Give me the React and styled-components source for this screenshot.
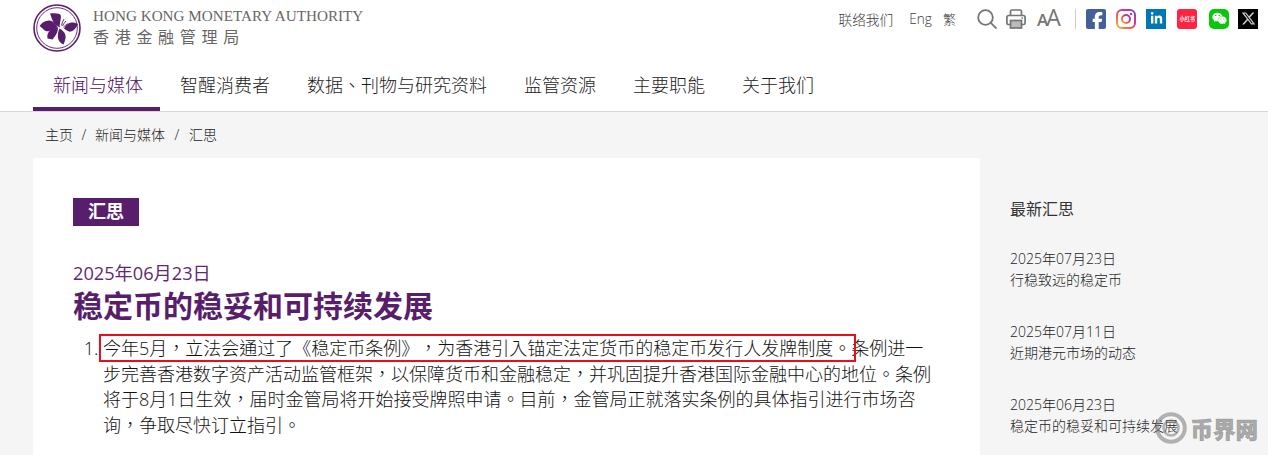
import React from 'react'
import styled, { createGlobalStyle } from 'styled-components'
import { FaFacebookF, FaLinkedinIn, FaWeixin, FaXTwitter } from 'react-icons/fa6'

const PURPLE = '#591e6b'
const FONT = '"Open Sans", "Noto Sans CJK TC", sans-serif'

const GlobalStyle = createGlobalStyle`
  html, body {
    margin: 0;
    background: #f5f5f5;
    overflow: hidden;
  }
  body {
    font-family: ${FONT};
    color: #333;
    text-spacing-trim: space-all;
    font-feature-settings: "palt" 0;
  }
  * { box-sizing: border-box; }
`

const Page = styled.div`
  width: 1268px;
  height: 455px;
  overflow: hidden;
  position: relative;
`

const Header = styled.header`
  background: #fff;
  height: 112px;
  border-bottom: 1px solid #d8d8d8;
  padding-left: 33px;
`

const TopRow = styled.div`
  height: 64px;
  display: flex;
  justify-content: space-between;
  align-items: flex-start;
`

const Logo = styled.a`
  display: flex;
  gap: 12px;
  padding-top: 4px;
`

const LogoText = styled.div`
  display: flex;
  flex-direction: column;
  padding-top: 3px;
  color: #666;
`

const LogoEn = styled.span`
  font-family: "Liberation Serif", serif;
  font-size: 15.2px;
  line-height: 18px;
  white-space: nowrap;
`

const LogoZh = styled.span`
  font-family: "Noto Sans CJK TC", serif;
  font-size: 16px;
  line-height: 22px;
  letter-spacing: 5.7px;
  white-space: nowrap;
`

const Tools = styled.div`
  display: flex;
  align-items: center;
  height: 37px;
  padding-right: 10px;
`

const TopLink = styled.a`
  font-size: ${p => p.$size || 13.7}px;
  font-weight: 300;
  color: #3c3c3c;
  margin-right: ${p => p.$gap}px;
  white-space: nowrap;
`

const ToolIcon = styled.svg`
  display: block;
  margin-right: ${p => p.$gap}px;
  flex: none;
`

const SizeToggle = styled.span`
  display: flex;
  align-items: baseline;
  width: 23px;
  margin-right: 15px;
  color: #757575;
  line-height: 20px;
  font-family: "Open Sans", sans-serif;
  font-size: 23px;
  font-weight: 400;
`

const SmallA = styled.span`
  font-size: 17px;
  font-weight: 600;
  margin-right: -2px;
`

const Divider = styled.span`
  width: 1px;
  height: 20px;
  background: #ccc;
  margin-right: 10px;
`

const Social = styled.a`
  width: 20px;
  height: 20px;
  flex: none;
  display: flex;
  align-items: ${p => p.$low ? 'flex-end' : 'center'};
  justify-content: ${p => p.$low ? 'flex-end' : 'center'};
  margin-right: ${p => p.$gap}px;
  border-radius: ${p => p.$radius || 0}px;
  background: ${p => p.$bg};
  color: ${p => p.$color || '#fff'};
  font-size: ${p => p.$icon || 14}px;
  overflow: hidden;
`

const RedNoteLabel = styled.span`
  font-size: 5.5px;
  font-weight: 700;
  white-space: nowrap;
  transform: scale(0.95);
`

const Nav = styled.nav`
  display: flex;
  height: 47px;
`

const NavItem = styled.a`
  padding: 8px 17px 0 20px;
  font-size: 18px;
  line-height: 26px;
  white-space: nowrap;
  font-weight: 300;
  color: ${p => (p.$active ? '#4a0e5e' : '#1c1c1c')};
  border-bottom: 4px solid ${p => (p.$active ? PURPLE : 'transparent')};
`

const Crumbs = styled.div`
  height: 46px;
  padding: 0 0 2px 45px;
  display: flex;
  align-items: center;
  font-size: 14px;
  font-weight: 300;
  color: #222;
`

const Slash = styled.span`
  width: ${p => p.$w}px;
  text-align: center;
  font-size: 14px;
`

const Body = styled.div`
  display: flex;
  padding-left: 33px;
`

const Card = styled.main`
  width: 947px;
  min-height: 400px;
  background: #fff;
  padding: 40px 40px 0;
  flex: none;
`

const Tag = styled.span`
  display: block;
  width: 66px;
  height: 28px;
  background: ${PURPLE};
  color: #fff;
  font-size: 18px;
  font-weight: 700;
  line-height: 26px;
  text-align: center;
`

const DateLine = styled.div`
  margin-top: 33px;
  font-size: 18.2px;
  font-weight: 400;
  line-height: 28px;
  color: #5f2a72;
`

const Title = styled.h1`
  margin: 0;
  font-size: 30px;
  line-height: 38px;
  font-weight: 700;
  color: ${PURPLE};
`

const List = styled.ol`
  margin: 11px 0 0;
  padding: 0 0 0 30px;
  font-size: 18px;
  font-weight: 300;
  line-height: 25.7px;
  color: #111;
  width: 860px;
`

const ListEntry = styled.li`
  position: relative;
`

const RedBox = styled.span`
  position: absolute;
  left: -4px;
  top: -2px;
  width: 757px;
  height: 28px;
  border: 2px solid #e60f1e;
  pointer-events: none;
`

const Side = styled.aside`
  padding: 40px 0 0 30px;
  width: 280px;
`

const SideHead = styled.h2`
  margin: 0 0 28px;
  font-size: 16px;
  line-height: 22px;
  font-weight: 400;
  color: #333;
`

const SideItem = styled.a`
  display: block;
  margin-bottom: 31px;
  font-size: 14px;
  font-weight: 300;
  line-height: 21px;
  color: #222;
  white-space: nowrap;
`

const SideDate = styled.div``

const Watermark = styled.div`
  position: absolute;
  right: 10px;
  top: 412px;
  display: flex;
  align-items: center;
  gap: 3px;
  color: rgba(120, 120, 120, 0.62);
  font-family: "Noto Sans CJK SC", sans-serif;
  font-size: 22.5px;
  font-weight: 900;
  -webkit-text-stroke: 0.5px rgba(120, 120, 120, 0.62);
  line-height: 32px;
`

const SIDE_ITEMS = [
  { date: '2025年07月23日', title: '行稳致远的稳定币' },
  { date: '2025年07月11日', title: '近期港元市场的动态' },
  { date: '2025年06月23日', title: '稳定币的稳妥和可持续发展' },
]

const NAV_ITEMS = ['新闻与媒体', '智醒消费者', '数据、刊物与研究资料', '监管资源', '主要职能', '关于我们']

function Emblem() {
  return (
    <svg width="48" height="48" viewBox="0 0 48 48">
      <circle cx="24" cy="24" r="23" fill="none" stroke={PURPLE} strokeWidth="1.600" />
      <circle cx="24" cy="24" r="20.300" fill="none" stroke={PURPLE} strokeWidth="0.900" />
      <g fill={PURPLE}>
        <path d="M17 9.500c3.500-.5 7-.5 9.500.5 2 1 1.500 4 1 6.500-.5 2-.8 4.500-.5 7-3-1.500-5.500-3.500-7-6-1.200-2.500-2-5.500-3-8z" />
        <path d="M6.500 22c2.500-3.500 6-5.800 10-5.500 3.500.4 6.500 3.500 8.500 7-3 .3-5.500 2.500-8.500 3.500-2.500.8-4.500 0-6-1.500-1-1.200-2.500-2.500-4-3.500z" />
        <path d="M14.500 34.500c-.8-3.500.5-6.500 3-8.500 2-1.500 4.500-2.500 7.500-2.500 0 3-1 6-2.500 8-1 1.500-2 2.500-3 4-1.500-.5-3.500-.5-5-1z" />
        <path d="M26.500 24.500c2.800 1.500 5.500 4 6 7 .4 2.500-.5 5.500-2 9-2.800-1-5-3.500-5.500-6.500-.5-3.500.2-6.800 1.500-9.500z" />
        <path d="M31 24.500c1.500-3 4-5.500 7-6 2.500-.4 4.800.3 7 1.500-1.500 3.500-3.800 6.500-7 7.500-2.500.8-5-1.500-7-3z" />
      </g>
      <g fill="none" stroke="#fff" strokeWidth="0.700">
        <path d="M27 22c.3-2 .8-3.500 1.700-5" />
      </g>
      <g fill="none" stroke={PURPLE} strokeWidth="0.900">
        <path d="M28.500 21.500c.5-2.500 1.500-4.500 2.500-6.500M29.500 22c1-2 2-3.500 3.500-5M30.500 23c1.500-1 2.500-2.500 4-3.500" />
      </g>
    </svg>
  )
}

function SearchIcon() {
  return (
    <ToolIcon $gap={9} width="20" height="20" viewBox="0 0 20 20" fill="none" stroke="#757575" strokeWidth="1.800">
      <circle cx="8.500" cy="8.500" r="7.300" />
      <path d="M13.800 13.800L19.500 19.500" />
    </ToolIcon>
  )
}

function PrintIcon() {
  return (
    <ToolIcon $gap={11} width="20" height="20" viewBox="0 0 20 20" fill="none" stroke="#757575" strokeWidth="1.700">
      <path d="M4.500 6.500V2.500c0-1 .6-1.500 1.500-1.500h8c.9 0 1.500.5 1.500 1.500v4" />
      <path d="M4.500 15.500H2.500c-1 0-1.600-.6-1.600-1.600V8.500c0-1.200.8-2 2-2h14.200c1.200 0 2 .8 2 2v5.400c0 1-.6 1.600-1.600 1.600h-2" />
      <rect x="4.500" y="11.500" width="11" height="7.500" fill="#bbb" />
      <path d="M15.500 9h1.500" />
    </ToolIcon>
  )
}

function InstagramIcon() {
  return (
    <ToolIcon $gap={10} width="20" height="20" viewBox="0 0 20 20" fill="none" strokeWidth="2">
      <defs>
        <linearGradient id="igStroke" x1="0" y1="1" x2="1" y2="0">
          <stop offset="0" stopColor="#f9b233" />
          <stop offset="0.5" stopColor="#ee3a6a" />
          <stop offset="1" stopColor="#7a45d0" />
        </linearGradient>
      </defs>
      <rect x="1" y="1" width="18" height="18" rx="5" stroke="url(#igStroke)" />
      <circle cx="10" cy="10" r="4" stroke="url(#igStroke)" />
      <circle cx="15" cy="5" r="1.200" fill="#b32fc0" stroke="none" />
    </ToolIcon>
  )
}

function CoinMark() {
  return (
    <svg width="32" height="32" viewBox="0 0 32 32" fill="none" stroke="rgba(120,120,120,0.55)">
      <circle cx="16" cy="16" r="13.800" strokeWidth="4" />
      <circle cx="16" cy="16" r="7.500" strokeWidth="2.500" />
    </svg>
  )
}

export default function App() {
  return (
    <Page>
      <GlobalStyle />
      <Header>
        <TopRow>
          <Logo>
            <Emblem />
            <LogoText>
              <LogoEn>HONG KONG MONETARY AUTHORITY</LogoEn>
              <LogoZh>香港金融管理局</LogoZh>
            </LogoText>
          </Logo>
          <Tools>
            <TopLink $gap={16}>联络我们</TopLink>
            <TopLink $gap={11}>Eng</TopLink>
            <TopLink $gap={21} $size={13}>繁</TopLink>
            <SearchIcon />
            <PrintIcon />
            <SizeToggle><SmallA>A</SmallA>A</SizeToggle>
            <Divider />
            <Social $gap={10} $radius={2} $icon={17} $low $bg="#43609c"><FaFacebookF /></Social>
            <InstagramIcon />
            <Social $gap={11} $icon={13} $bg="#0077b5"><FaLinkedinIn /></Social>
            <Social $gap={12} $radius={3} $bg="#ff2442"><RedNoteLabel>小红书</RedNoteLabel></Social>
            <Social $gap={9} $radius={5} $icon={15} $bg="#09c709"><FaWeixin /></Social>
            <Social $gap={0} $icon={15} $bg="#000" $color="#ccc"><FaXTwitter /></Social>
          </Tools>
        </TopRow>
        <Nav>
          {NAV_ITEMS.map((item, i) => (
            <NavItem key={item} $active={i === 0}>{item}</NavItem>
          ))}
        </Nav>
      </Header>
      <Crumbs>
        主页<Slash $w={22}>/</Slash>新闻与媒体<Slash $w={24}>/</Slash>汇思
      </Crumbs>
      <Body>
        <Card>
          <Tag>汇思</Tag>
          <DateLine>2025年06月23日</DateLine>
          <Title>稳定币的稳妥和可持续发展</Title>
          <List>
            <ListEntry>
              <RedBox />
              今年5月，立法会通过了《稳定币条例》，为香港引入锚定法定货币的稳定币发行人发牌制度。条例进一步完善香港数字资产活动监管框架，以保障货币和金融稳定，并巩固提升香港国际金融中心的地位。条例将于8月1日生效，届时金管局将开始接受牌照申请。目前，金管局正就落实条例的具体指引进行市场咨询，争取尽快订立指引。
            </ListEntry>
          </List>
        </Card>
        <Side>
          <SideHead>最新汇思</SideHead>
          {SIDE_ITEMS.map(item => (
            <SideItem key={item.date}>
              <SideDate>{item.date}</SideDate>
              {item.title}
            </SideItem>
          ))}
        </Side>
      </Body>
      <Watermark>
        <CoinMark />
        币界网
      </Watermark>
    </Page>
  )
}
